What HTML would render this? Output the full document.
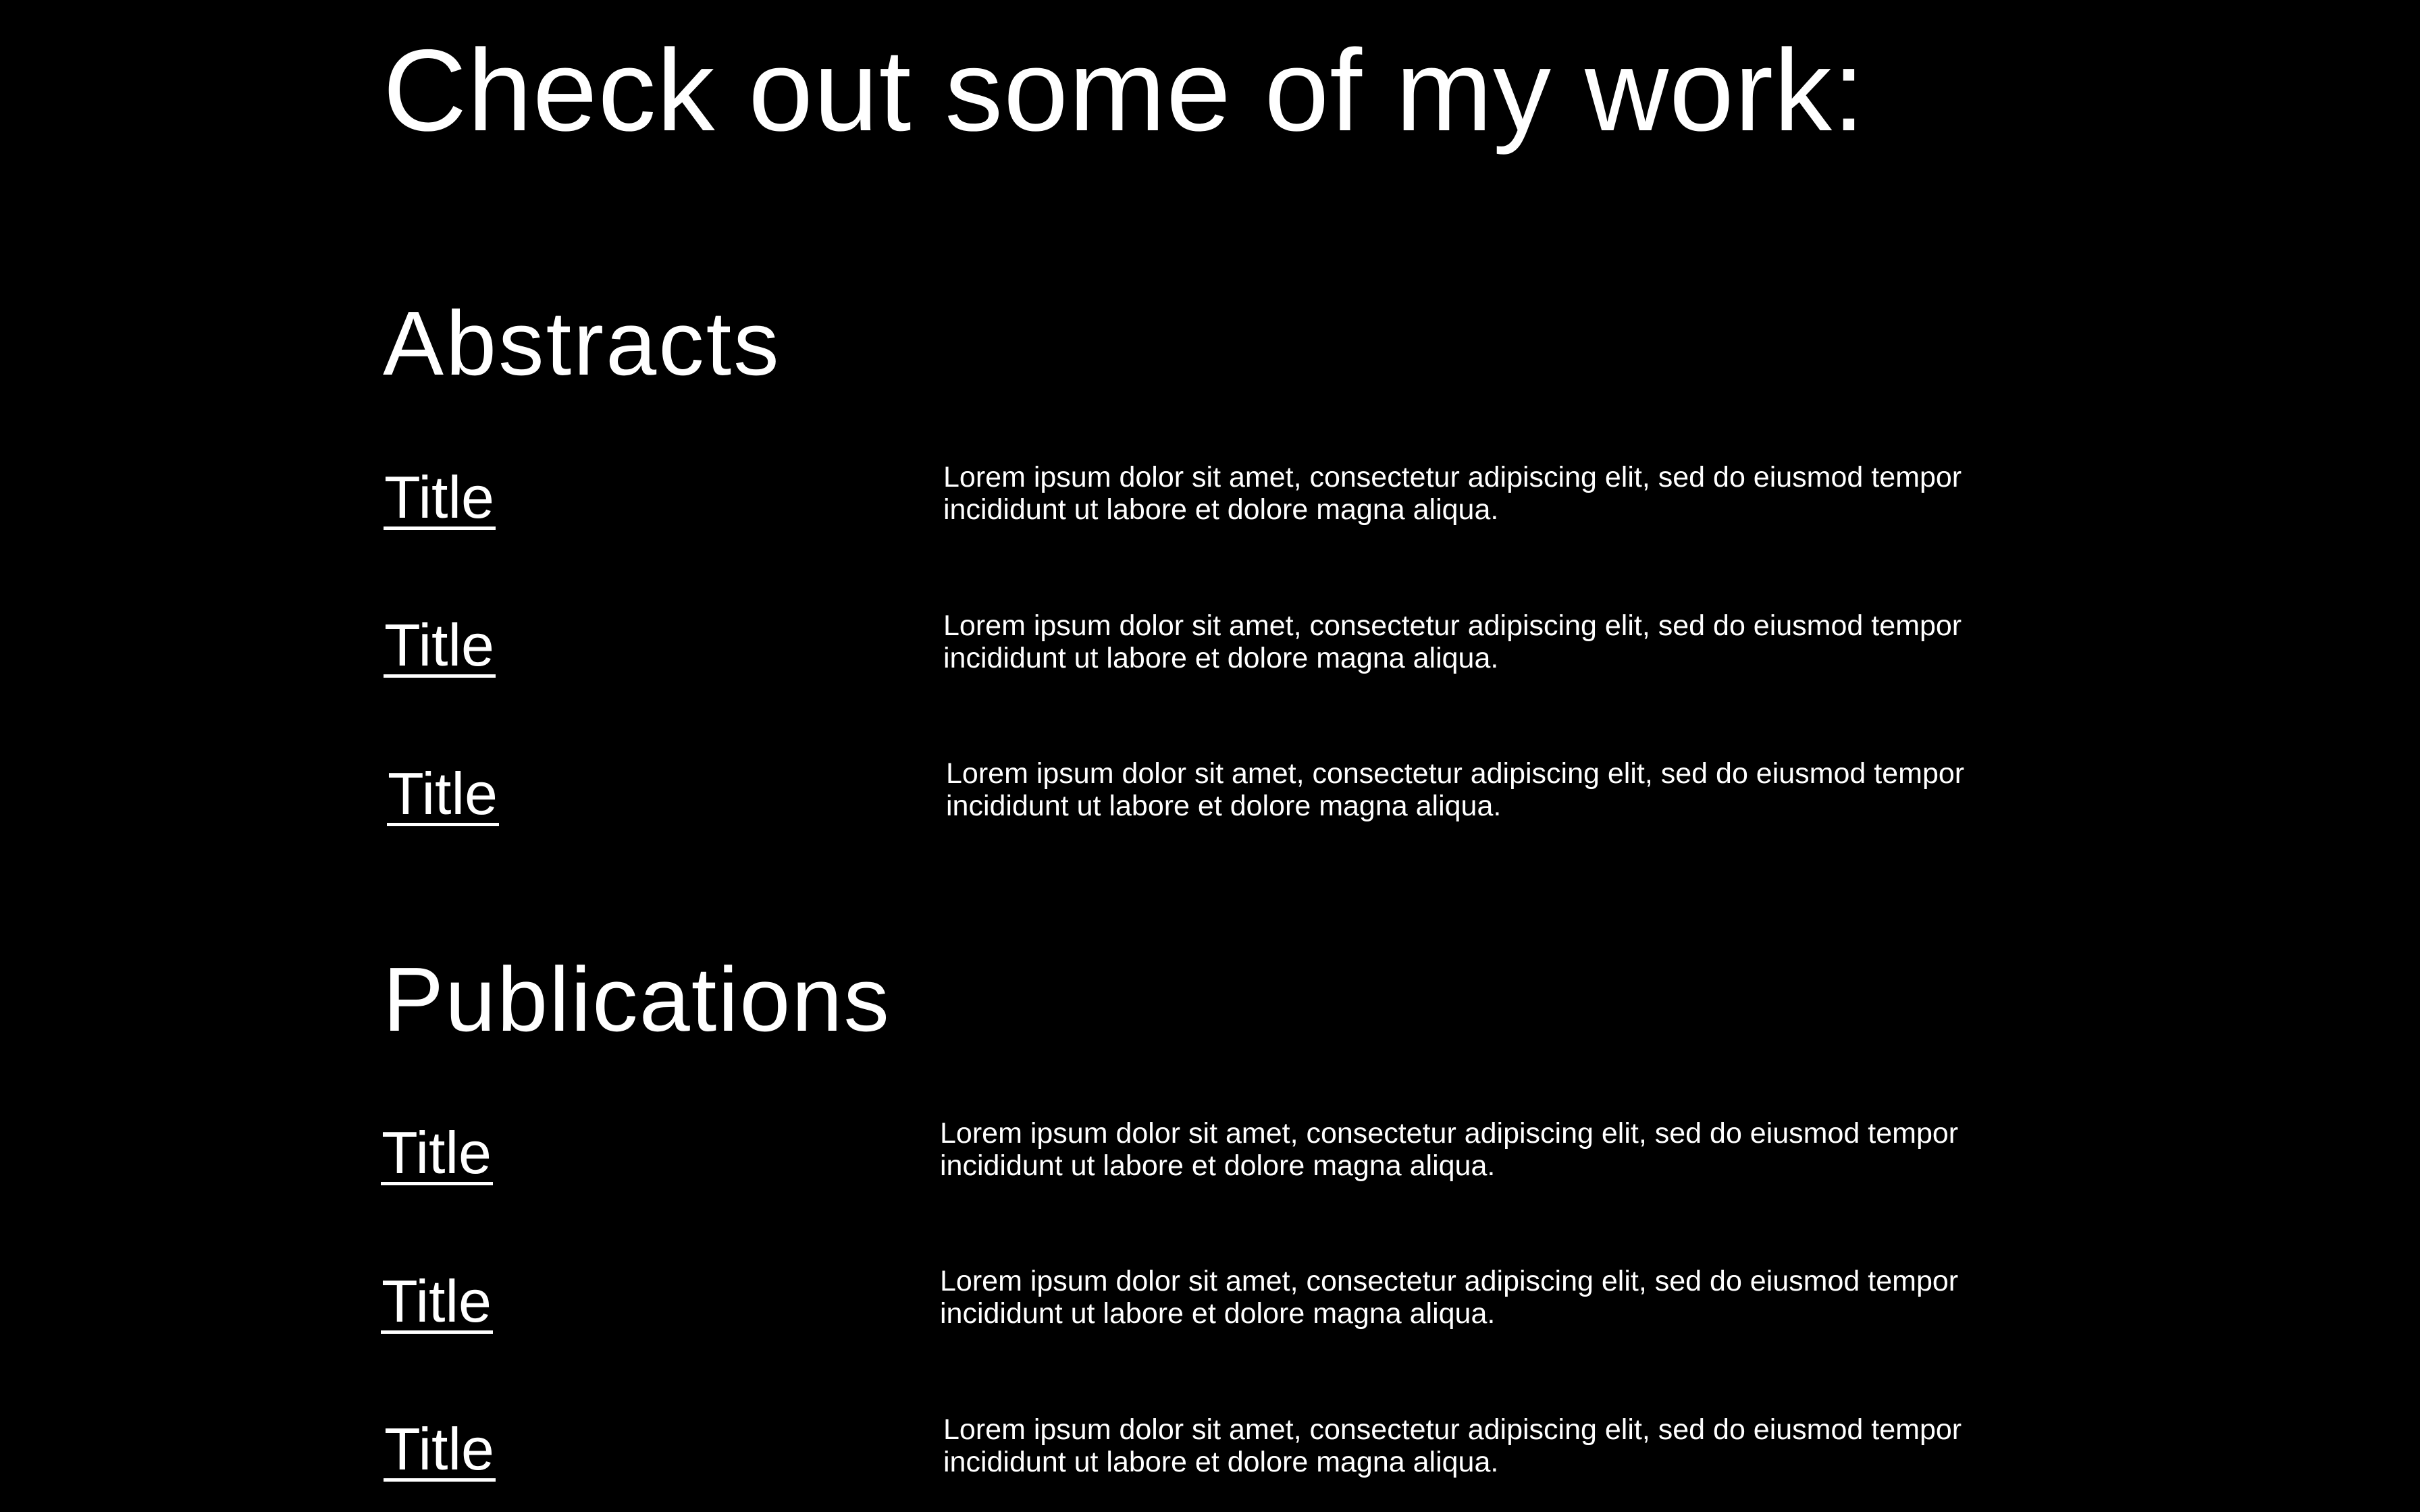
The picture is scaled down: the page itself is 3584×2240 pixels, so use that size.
<!DOCTYPE html>
<html><head><meta charset="utf-8"><style>
html,body{margin:0;padding:0;background:#000;width:3584px;height:2240px;overflow:hidden}
body{position:relative;font-family:"Liberation Sans",sans-serif;color:#fff}
.a{position:absolute;white-space:nowrap;line-height:1}
.h1{font-size:172px;letter-spacing:1px}
.h2{font-size:135px}
.t{font-size:88px}
.u{position:absolute;height:5px;width:166px;background:#fff}
.p{position:absolute;font-size:43px;line-height:48px;white-space:nowrap}
</style></head><body>
<div class="a h1" style="left:567px;top:48px">Check out some of my work:</div>
<div class="a h2" style="left:567px;top:441px;letter-spacing:3px">Abstracts</div>

<div class="a t" style="left:569px;top:693px">Title</div><div class="u" style="left:568px;top:780px"></div>
<div class="p" style="left:1397px;top:683px">Lorem ipsum dolor sit amet, consectetur adipiscing elit, sed do eiusmod tempor<br>incididunt ut labore et dolore magna aliqua.</div>

<div class="a t" style="left:569px;top:912px">Title</div><div class="u" style="left:568px;top:999px"></div>
<div class="p" style="left:1397px;top:903px">Lorem ipsum dolor sit amet, consectetur adipiscing elit, sed do eiusmod tempor<br>incididunt ut labore et dolore magna aliqua.</div>

<div class="a t" style="left:574px;top:1132px">Title</div><div class="u" style="left:573px;top:1219px"></div>
<div class="p" style="left:1401px;top:1122px">Lorem ipsum dolor sit amet, consectetur adipiscing elit, sed do eiusmod tempor<br>incididunt ut labore et dolore magna aliqua.</div>

<div class="a h2" style="left:567px;top:1413px;letter-spacing:2px">Publications</div>

<div class="a t" style="left:565px;top:1664px">Title</div><div class="u" style="left:564px;top:1751px"></div>
<div class="p" style="left:1392px;top:1655px">Lorem ipsum dolor sit amet, consectetur adipiscing elit, sed do eiusmod tempor<br>incididunt ut labore et dolore magna aliqua.</div>

<div class="a t" style="left:565px;top:1884px">Title</div><div class="u" style="left:564px;top:1971px"></div>
<div class="p" style="left:1392px;top:1874px">Lorem ipsum dolor sit amet, consectetur adipiscing elit, sed do eiusmod tempor<br>incididunt ut labore et dolore magna aliqua.</div>

<div class="a t" style="left:569px;top:2103px">Title</div><div class="u" style="left:568px;top:2190px"></div>
<div class="p" style="left:1397px;top:2094px">Lorem ipsum dolor sit amet, consectetur adipiscing elit, sed do eiusmod tempor<br>incididunt ut labore et dolore magna aliqua.</div>
</body></html>
